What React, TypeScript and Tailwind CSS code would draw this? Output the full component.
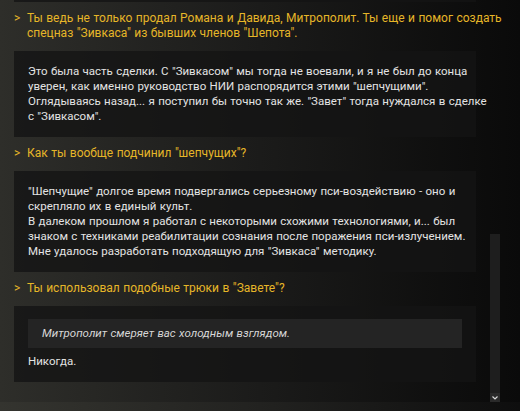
const dialog = [
  {
    question: [
      "Ты ведь не только продал Романа и Давида, Митрополит. Ты еще и помог создать",
      "спецназ \"Зивкаса\" из бывших членов \"Шепота\".",
    ],
    answer: [
      "Это была часть сделки. С \"Зивкасом\" мы тогда не воевали, и я не был до конца",
      "уверен, как именно руководство НИИ распорядится этими \"шепчущими\".",
      "Оглядываясь назад... я поступил бы точно так же. \"Завет\" тогда нуждался в сделке",
      "с \"Зивкасом\".",
    ],
  },
  {
    question: ["Как ты вообще подчинил \"шепчущих\"?"],
    answer: [
      "\"Шепчущие\" долгое время подвергались серьезному пси-воздействию - оно и",
      "скрепляло их в единый культ.",
      "В далеком прошлом я работал с некоторыми схожими технологиями, и... был",
      "знаком с техниками реабилитации сознания после поражения пси-излучением.",
      "Мне удалось разработать подходящую для \"Зивкаса\" методику.",
    ],
  },
  {
    question: ["Ты использовал подобные трюки в \"Завете\"?"],
    narration: "Митрополит смеряет вас холодным взглядом.",
    answer: ["Никогда."],
  },
];

const Lines = ({ lines }: { lines: string[] }) => (
  <>
    {lines.map((line, i) => (
      <span key={i} className="block whitespace-nowrap">
        {line}
      </span>
    ))}
  </>
);

export default function App() {
  return (
    <div
      className="relative h-[411px] w-[520px] overflow-hidden bg-gradient-to-r from-[#2e2e2a] via-[#1b1b1a] to-[#0a0a0a] text-[11.5px] leading-[15px] [word-spacing:0.5px]"
      style={{ fontFamily: "Roboto, 'Noto Sans', sans-serif" }}
    >
      <div className="flex h-[402px] flex-col pl-[14px] pr-[44px]">
        {/* tail of the previous answer */}
        <div className="h-[2px] bg-[#141414]/80" />

        {dialog.map((item, i) => (
          <div key={i} className="flex flex-col">
            <div className="flex pt-[9px] pb-[10px] text-[12px] text-[#e6b628]">
              <span className="w-[13px] shrink-0">&gt;</span>
              <div>
                <Lines lines={item.question} />
              </div>
            </div>

            <div className="bg-[#141414]/80 px-[14px] py-[13px] text-[#e3e3e3]">
              {item.narration && (
                <div className="mb-[6px] bg-[#242424] px-[14px] py-[7px] italic text-[#d6d6d6]">
                  {item.narration}
                </div>
              )}
              <Lines lines={item.answer} />
            </div>
          </div>
        ))}
      </div>

      {/* footer strip */}
      <div className="h-[9px] bg-gradient-to-r from-[#34342f] via-[#222220] to-[#0e0e0e]" />

      {/* scrollbar */}
      <div className="absolute right-[20px] top-[234px] flex h-[168px] w-[10px] flex-col justify-end bg-[#1e1e1e]">
        <div className="flex h-[9px] items-center justify-center bg-[#2a2a2a]">
          <svg width="6" height="4" viewBox="0 0 6 4" fill="none">
            <path d="M0.5 0.5 3 3 5.5 0.5" stroke="#d8d8d8" strokeWidth="1.2" />
          </svg>
        </div>
      </div>
    </div>
  );
}
